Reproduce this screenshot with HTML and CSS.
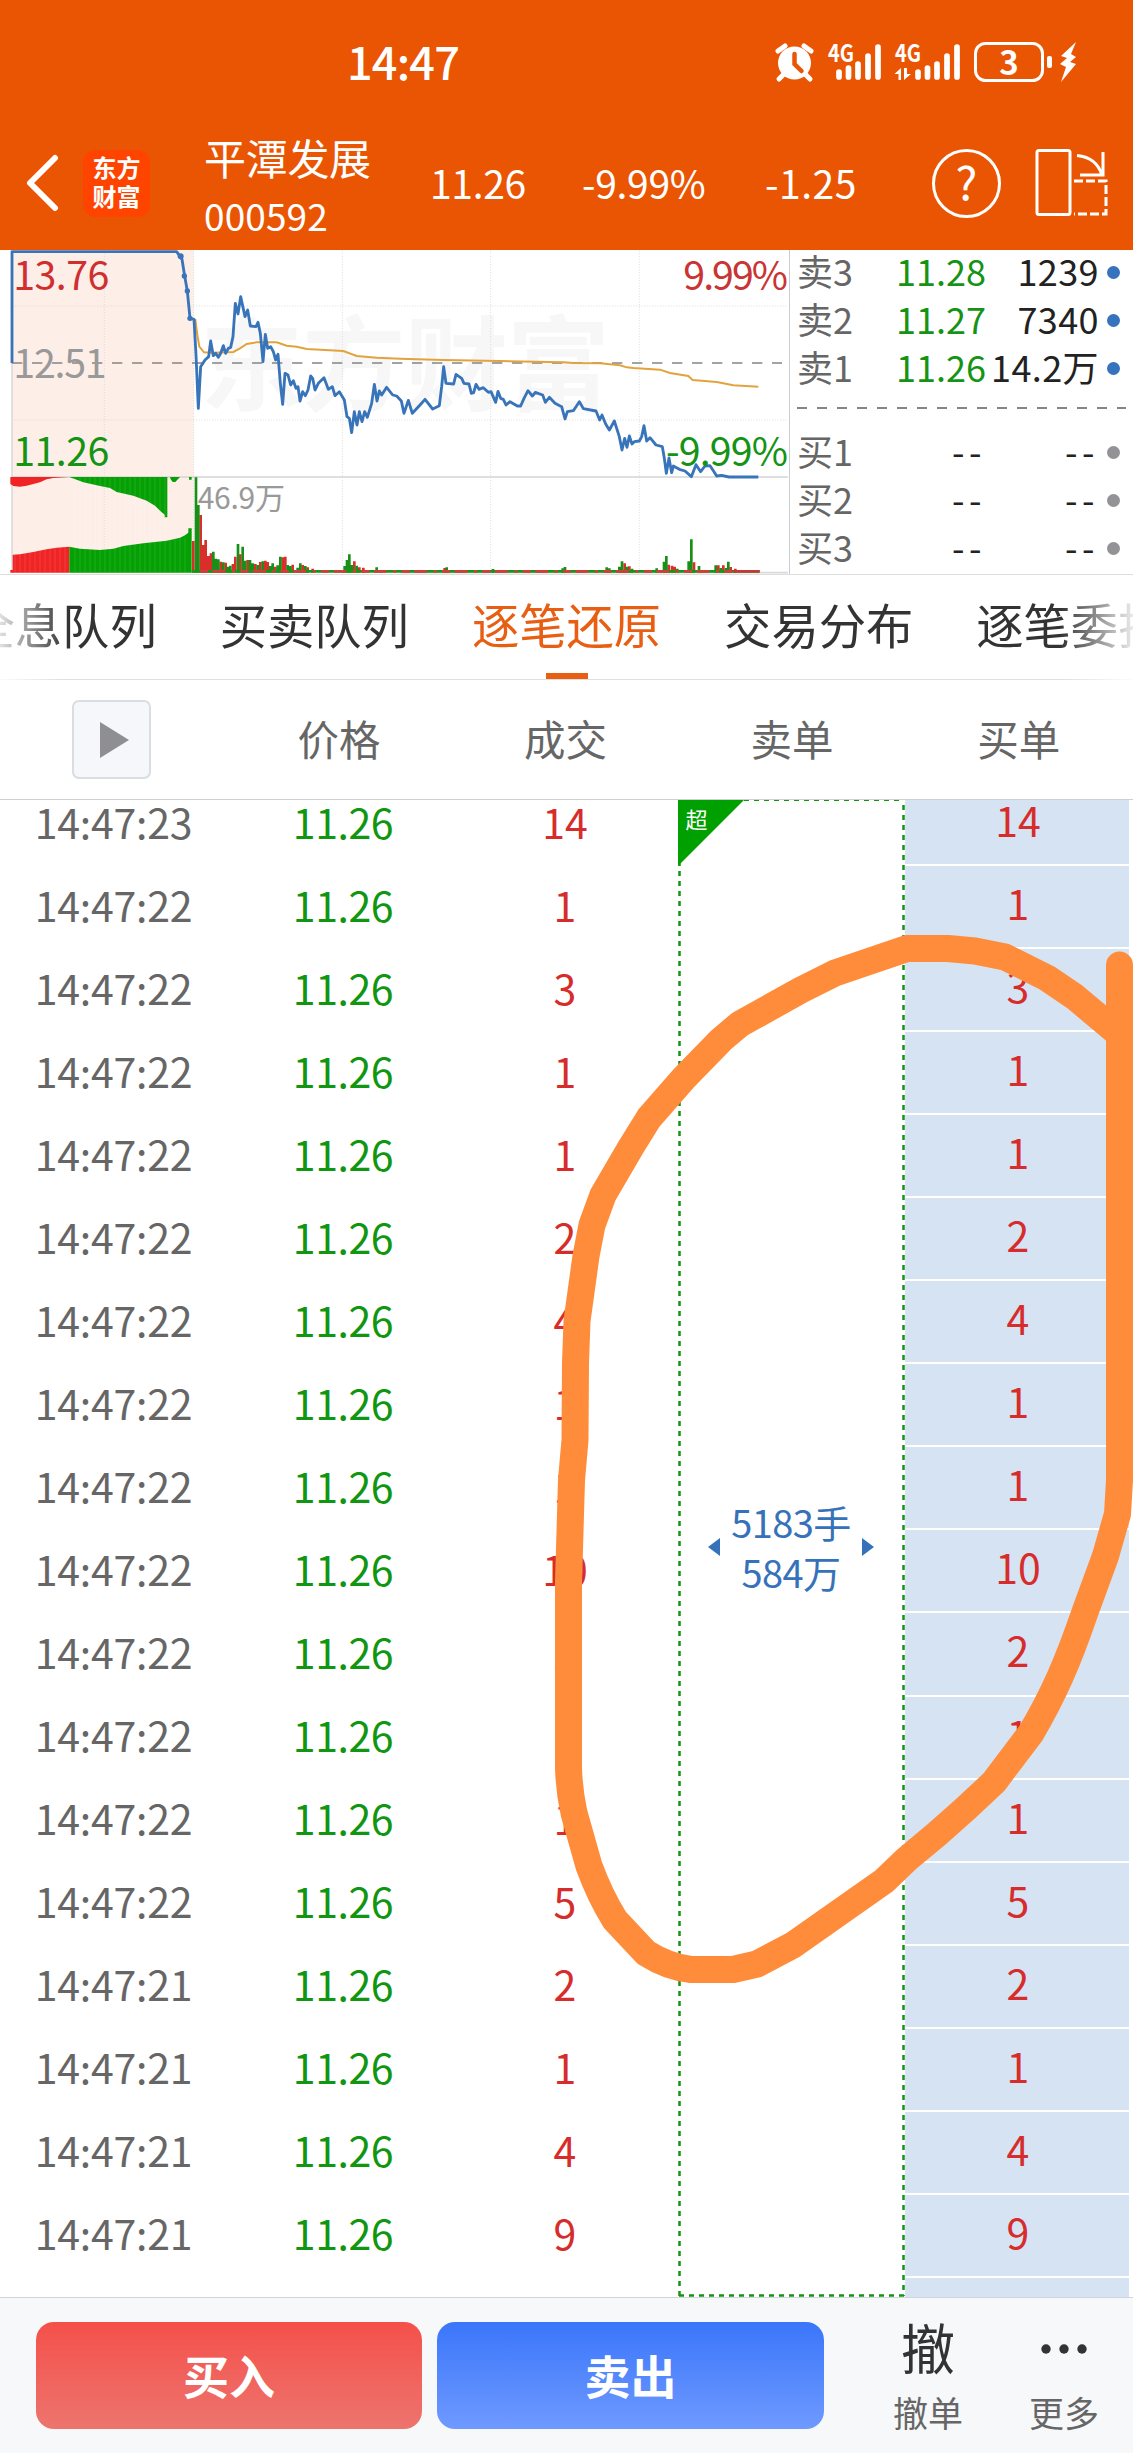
FILE: index.html
```html
<!DOCTYPE html>
<html lang="zh-CN">
<head>
<meta charset="utf-8">
<title>平潭发展 000592</title>
<link rel="stylesheet" href="styles.css">
</head>
<body>
<div class="app">
  <header class="top">
    <div class="status">
      <span class="clock">14:47</span>
      <svg class="status-icons" width="310" height="50" viewBox="770 38 310 50" fill="#fff">
        <circle cx="794.5" cy="63" r="16.5"/>
        <path d="M778 51l7-5M811 51l-7-5M784 74l-5 5M805 74l5 5" stroke="#fff" stroke-width="5" stroke-linecap="round"/>
        <path d="M794.500 54v10l7 7" fill="none" stroke="#ea5504" stroke-width="4.500" stroke-linecap="round"/>
        <text class="net" x="828" y="62" textLength="26" lengthAdjust="spacingAndGlyphs">4G</text>
        <path class="bars" d="M839 72v5M848.500 68v9M858 64v13M868 56v21M878 47v30"/>
        <text class="net" x="895" y="62" textLength="26" lengthAdjust="spacingAndGlyphs">4G</text>
        <path d="M901 68v12h-2.500v-6h-4zM904 68v12l7-6h-4v-6z"/>
        <path class="bars" d="M918 72v5M927.500 68v9M937 64v13M947 56v21M957 47v30"/>
        <rect x="975.500" y="43.500" width="67" height="37" rx="10" fill="none" stroke="#fff" stroke-width="3"/>
        <text class="charge" x="1009" y="74.500" text-anchor="middle">3</text>
        <rect x="1047" y="56" width="5" height="12" rx="2"/>
        <path d="M1076 42l-15 14 6 2-7 6 6 3-5 15 15-18-6-2 6-5-5-3z"/>
      </svg>
    </div>
    <div class="nav">
      <svg class="back" width="34" height="58" viewBox="0 0 34 58"><path d="M30 4L5 29l25 25" fill="none" stroke="#fff" stroke-width="6" stroke-linecap="round" stroke-linejoin="round"/></svg>
      <div class="logo"><span>东方</span><span>财富</span></div>
      <div class="stock"><span class="name">平潭发展</span><span class="code">000592</span></div>
      <div class="quote q1">11.26</div>
      <div class="quote q2">-9.99%</div>
      <div class="quote q3">-1.25</div>
      <div class="help">?</div>
      <svg class="rotate" width="76" height="72" viewBox="1034 147 76 72" fill="none" stroke="#fff" stroke-width="3">
        <rect x="1037" y="150.500" width="33" height="64" rx="2"/>
        <path d="M1077 155.500q20 2 25 20M1103 152v23h-23"/>
        <path d="M1074 181h32v33h-32" stroke-dasharray="9 3"/>
      </svg>
    </div>
  </header>

  <section class="market">
    <svg class="chart" width="789" height="324" viewBox="0 30 2367 972">
      <rect x="36" y="32" width="545" height="966" fill="#fdeee8"/>
      <text class="mark" x="600" y="488" textLength="1230">东方财富</text>
      <path d="M313 32V998M581 32V998M1027 32V998M1472 32V998M1918 32V998M36 198H2364M36 540H2364" class="grid"/>
      <path d="M36 32V998" stroke="#d5d5d8" stroke-width="4"/>
      <path d="M36 369H2346" stroke="#858585" stroke-width="5" stroke-dasharray="31 29"/>
      <path d="M36 711H2364" stroke="#d4d4d4" stroke-width="5"/>
      <path d="M1200 998H2364" stroke="#d9d9d9" stroke-width="5"/>
      <g class="red">
        <path d="M31 711H208L160 714 140 718 120 727 100 732 80 737 60 740 40 738 31 732zM31 998V990H38V944L60 943 100 936 140 928 170 923 208 920V998z"/>
        <path class="vol" d="M580 998V903M602 998V825M610 998V915M617 998V900M625 998V948M633 998V940M662 998V965M677 998V968M699 998V972M706 998V950M721 998V943M743 998V960M766 998V972M781 998V966M796 998V962M803 998V966M826 998V980M848 998V952M856 998V950M878 998V974M908 998V975M923 998V982M938 998V986M1063 998V964M1078 998V982M1090 998V983M1334 998V984M1874 998V970M1888 998V979M2006 998V974M2016 998V977M2024 998V980M2082 998V967M2155 998V976M2170 998V976M2192 998V981M2206 998V986"/>
      </g>
      <g class="green">
        <path d="M208 711L250 727 300 738 330 744 350 756 400 767 440 782 465 797 480 812 494 824V832H502V711zM510 711h30l-14 15h-8l-6-8zM567 711h8v8h-8zM208 998V920L240 926 300 930 340 926 370 918 430 910 500 902 540 893 555 886 565 878V865H575V998z"/>
        <path class="vol" d="M588 998V712M595 998V795M640 998V935M647 998V956M655 998V958M670 998V967M684 998V980M691 998V977M714 998V912M728 998V920M736 998V962M750 998V960M758 998V970M773 998V975M788 998V964M811 998V978M818 998V970M833 998V976M841 998V950M863 998V975M871 998V978M893 998V983M901 998V970M916 998V978M1034 998V978M1041 998V960M1048 998V943M1056 998V975M1070 998V977M1130 998V982M1340 998V982M1479 998V987M1688 998V985M1695 998V981M1820 998V982M1828 998V985M1858 998V980M1866 998V964M1881 998V980M1896 998V986M1970 998V985M1992 998V965M1999 998V948M2032 998V986M2066 998V964M2074 998V898M2097 998V978M2147 998V976M2162 998V984M2178 998V984M2185 998V965"/>
      </g>
      <path d="M45 925V998M60 920V998M75 920V998M90 920V998M105 920V998M120 920V998M135 920V998M150 920V998M165 920V998M180 920V998M195 920V998M225 712V998M240 712V998M255 712V998M270 712V998M285 712V998M300 712V998M315 712V998M330 712V998M345 712V998M360 712V998M375 712V998M390 712V998M405 712V998M420 712V998M435 712V998M450 712V998M465 712V998M480 712V998M495 712V998M510 895V998M525 895V998M540 895V998M555 895V998" stroke="#fff" stroke-opacity=".2" stroke-width="2"/>
      <path d="M575 994H2279" stroke="#159615" stroke-width="8"/>
      <path d="M600 994H2200" stroke="#d13c3c" stroke-width="8" stroke-dasharray="24 14 38 20 9 16"/>
      <path d="M2200 994H2279" stroke="#c33838" stroke-width="8"/>
      <path class="avg" d="M586 237L592 285 598 320 612 337 640 338 700 336 720 325 740 312 770 307 830 307 860 317 890 320 920 327 1030 333 1070 348 1130 353 1200 356 1330 360 1500 363 1690 367 1720 369 1800 370 1860 376 1880 382 1900 384 1980 389 2010 399 2065 408 2078 420 2150 426 2200 436 2275 440"/>
      <path class="price" d="M36 369V35H530L546 58 554 108 562 153 570 235 582 238 588 345 595 505 602 380 615 360 626 350 632 303 640 347 647 340 655 352 662 340 670 317 677 340 685 325 692 322 699 290 706 190 714 222 722 170 735 230 743 210 751 258 768 260 774 247 781 280 789 365 796 283 803 325 812 320 820 335 827 360 834 343 841 430 848 493 855 400 864 405 872 435 880 422 888 445 894 440 900 483 908 455 916 467 924 450 932 408 938 415 945 450 955 430 972 413 985 448 997 440 1005 467 1018 455 1033 480 1041 530 1048 535 1055 578 1063 515 1071 555 1078 515 1086 545 1094 515 1102 532 1115 490 1123 433 1131 483 1138 453 1145 465 1160 442 1178 465 1190 468 1204 483 1212 520 1225 481 1237 520 1260 495 1275 478 1298 507 1318 497 1325 440 1331 380 1338 430 1361 432 1368 403 1385 415 1392 430 1407 432 1414 460 1421 458 1428 433 1437 448 1450 443 1465 457 1473 455 1487 487 1494 454 1502 475 1510 478 1518 495 1530 485 1552 498 1562 498 1572 475 1584 452 1597 468 1606 457 1628 465 1636 487 1648 472 1665 490 1685 500 1695 537 1702 515 1720 512 1738 485 1750 506 1788 513 1799 540 1806 525 1817 552 1828 570 1843 543 1858 590 1866 630 1874 595 1881 622 1888 588 1896 612 1903 605 1918 603 1925 590 1932 557 1940 603 1950 593 1968 615 1987 620 1993 655 1999 700 2007 654 2015 698 2020 678 2038 688 2055 693 2074 710 2088 674 2102 695 2115 678 2130 677 2142 695 2150 708 2165 706 2187 711H2275"/>
      <g fill="#3874b9"><circle cx="542" cy="49" r="9"/><circle cx="553" cy="108" r="8"/><circle cx="562" cy="153" r="8"/><circle cx="570" cy="235" r="8"/></g>
      <g class="scale">
        <text x="40" y="150" textLength="288" fill="#cf2f2f">13.76</text>
        <text x="40" y="413" textLength="280" fill="#999">12.51</text>
        <text x="40" y="678" textLength="288" fill="#149314">11.26</text>
        <text x="2050" y="150" textLength="314" fill="#c93434">9.99%</text>
        <text x="1998" y="678" textLength="366" fill="#149314">-9.99%</text>
        <text x="593" y="807" textLength="262" class="small">46.9万</text>
      </g>
    </svg>
    <div class="book">
      <div class="level sell"><span>卖3</span><b>11.28</b><em>1239</em><i></i></div>
      <div class="level sell"><span>卖2</span><b>11.27</b><em>7340</em><i></i></div>
      <div class="level sell"><span>卖1</span><b>11.26</b><em>14.2万</em><i></i></div>
      <div class="split"></div>
      <div class="level buy"><span>买1</span><b>--</b><em>--</em><i></i></div>
      <div class="level buy"><span>买2</span><b>--</b><em>--</em><i></i></div>
      <div class="level buy"><span>买3</span><b>--</b><em>--</em><i></i></div>
    </div>
  </section>

  <nav class="tabs">
    <a>全息队列</a><a>买卖队列</a><a class="on">逐笔还原</a><a>交易分布</a><a>逐笔委托</a>
  </nav>

  <div class="cols">
    <div><button class="play"><svg width="29" height="36" viewBox="0 0 29 36"><path d="M0 0l29 18L0 36z" fill="#8e8e93"/></svg></button></div>
    <div>价格</div><div>成交</div><div>卖单</div><div>买单</div>
  </div>

  <main class="ticks">
    <div class="deals">
      <div class="row"><span>14:47:23</span><b>11.26</b><em>14</em></div>
      <div class="row"><span>14:47:22</span><b>11.26</b><em>1</em></div>
      <div class="row"><span>14:47:22</span><b>11.26</b><em>3</em></div>
      <div class="row"><span>14:47:22</span><b>11.26</b><em>1</em></div>
      <div class="row"><span>14:47:22</span><b>11.26</b><em>1</em></div>
      <div class="row"><span>14:47:22</span><b>11.26</b><em>2</em></div>
      <div class="row"><span>14:47:22</span><b>11.26</b><em>4</em></div>
      <div class="row"><span>14:47:22</span><b>11.26</b><em>1</em></div>
      <div class="row"><span>14:47:22</span><b>11.26</b><em>1</em></div>
      <div class="row"><span>14:47:22</span><b>11.26</b><em>10</em></div>
      <div class="row"><span>14:47:22</span><b>11.26</b><em>2</em></div>
      <div class="row"><span>14:47:22</span><b>11.26</b><em>1</em></div>
      <div class="row"><span>14:47:22</span><b>11.26</b><em>1</em></div>
      <div class="row"><span>14:47:22</span><b>11.26</b><em>5</em></div>
      <div class="row"><span>14:47:21</span><b>11.26</b><em>2</em></div>
      <div class="row"><span>14:47:21</span><b>11.26</b><em>1</em></div>
      <div class="row"><span>14:47:21</span><b>11.26</b><em>4</em></div>
      <div class="row"><span>14:47:21</span><b>11.26</b><em>9</em></div>
    </div>
    <div class="sellorder">
      <svg class="frame" width="227" height="1497" viewBox="0 0 227 1497">
        <path d="M66 .5H225" stroke="#149414" stroke-width="1" stroke-dasharray="5 5"/>
        <path d="M1.500 1V1496M225.500 5V1496M1 1495.500H226" stroke="#149414" stroke-width="2.500" stroke-dasharray="5 5"/>
        <path d="M0 0H66L0 66z" fill="#00a000"/>
        <text x="7.500" y="28">超</text>
      </svg>
      <div class="lot">
        <svg width="12" height="18"><path d="M12 0v18L0 9z" fill="#3672b9"/></svg>
        <div><p>5183手</p><p>584万</p></div>
        <svg width="12" height="18"><path d="M0 0v18l12-9z" fill="#3672b9"/></svg>
      </div>
    </div>
    <div class="buyorder">
      <div>14</div><div>1</div><div>3</div><div>1</div><div>1</div><div>2</div><div>4</div><div>1</div><div>1</div><div>10</div><div>2</div><div>1</div><div>1</div><div>5</div><div>2</div><div>1</div><div>4</div><div>9</div><div></div>
    </div>
  </main>

  <footer class="bar">
    <button class="btn red-btn">买入</button>
    <button class="btn blue-btn">卖出</button>
    <div class="act cancel"><span class="glyph">撤</span><span>撤单</span></div>
    <div class="act more"><span class="glyph"><svg width="48" height="12" fill="#333"><circle cx="6" cy="6" r="4.700"/><circle cx="24" cy="6" r="4.700"/><circle cx="42" cy="6" r="4.700"/></svg></span><span>更多</span></div>
  </footer>

  <svg class="ink" width="1133" height="2453" viewBox="0 0 1133 2453">
    <path d="M1119.500 965V1480L1117.500 1514 1105.500 1556 1085 1612 Q1072 1650 1060 1677 1047 1706 1031 1733L994 1782 Q967 1808 937 1834L907 1859 884 1881 793 1945 757 1964 733 1969.500H691Q668 1967 646 1953L615 1920 Q600 1896 589 1866L574 1813 Q569 1790 568.500 1767V1583L571.500 1480 575 1440 575.500 1363 577 1321 586 1256 592 1225 603 1195 631 1147 649 1118 684 1078 721 1040 740 1024 801 990 835 973 907 948.500H948L975 951 1005 957 1047 978 1075 997 1119 1034"/>
  </svg>
</div>
</body>
</html>
```
FILE: styles.css
```css
* { box-sizing: border-box; margin: 0; padding: 0; }
body { width: 1133px; background: #fff; font-family: "Noto Sans CJK SC", sans-serif; color: #333; }
b, em, i { font-weight: 400; font-style: normal; }
button { font-family: inherit; border: 0; }
.app { position: relative; width: 1133px; height: 2453px; overflow: hidden; display: flex; flex-direction: column; }

.top { height: 250px; background: #ea5504; color: #fff; }
.status { height: 126px; padding: 38px 0 0 347px; display: flex; }
.status-icons { overflow: visible; }
.clock { width: 423px; font-size: 45px; font-weight: 500; line-height: 45px; letter-spacing: -.8px; }
.net { font-size: 24px; font-weight: 700; }
.charge { font-size: 33px; font-weight: 700; }
.bars { stroke: #fff; stroke-width: 5.700px; stroke-linecap: round; }
.nav { height: 124px; padding-left: 25px; display: flex; align-items: center; padding-bottom: 10px; }
.back { flex: none; }
.logo { flex: none; margin-left: 24px; width: 67px; height: 67px; border-radius: 12px; background: #ff4400; display: flex; flex-direction: column; align-items: center; padding-top: 2px; font-size: 24px; font-weight: 700; line-height: 29px; }
.stock { flex: none; width: 226px; margin-left: 54px; display: flex; flex-direction: column; }
.name { font-size: 42px; line-height: 60px; letter-spacing: -.3px; margin-top: 3px; }
.code { font-size: 37px; line-height: 56px; letter-spacing: .1px; }
.quote { flex: none; font-size: 39px; line-height: 50px; letter-spacing: -.3px; margin-top: -2px; }
.q1 { width: 152px; }
.q2 { width: 183px; }
.q3 { width: 167px; letter-spacing: .5px; }
.help { flex: none; width: 69px; height: 69px; border: 3px solid #fff; border-radius: 50%; text-align: center; font-size: 46px; line-height: 57px; }
.rotate { flex: none; margin-left: 33px; }

.market { height: 325px; display: flex; border-bottom: 1px solid #dedede; }
.chart { flex: none; display: block; }
.mark { font-size: 310px; font-weight: 700; fill: #f7f7f7; }
.grid { stroke: #dcdcdc; stroke-width: 3px; stroke-dasharray: 3 5; fill: none; }
.red { fill: #f02424; }
.green { fill: #04a004; }
.vol { stroke-width: 8px; }
.red .vol { stroke: #d92f2b; }
.green .vol { stroke: #188f16; }
.avg { fill: none; stroke: #e2a33d; stroke-width: 6px; }
.price { fill: none; stroke: #3874b9; stroke-width: 8.500px; stroke-linejoin: round; }
.scale { font-size: 118px; }
.small { font-size: 90px; fill: #999; }
.book { width: 344px; border-left: 1px solid #ccc; padding-left: 7px; }
.level { height: 48px; display: flex; align-items: center; font-size: 36px; line-height: 48px; padding-bottom: 8px; color: #666; }
.level span { width: 74px; }
.level b { width: 115px; text-align: right; color: #149314; }
.level em { width: 113px; text-align: right; color: #222; white-space: nowrap; letter-spacing: .4px; }
.level i { width: 13px; height: 13px; border-radius: 50%; margin: 4px 0 0 8px; background: #3573bd; }
.buy b, .buy em { color: #222; letter-spacing: 4.500px; }
.buy i { background: #929297; }
.split { height: 36px; margin-right: 7px; background: repeating-linear-gradient(90deg, #858585 0 10px, transparent 10px 20px) 0 13px / 100% 2px no-repeat; }

.tabs { height: 105px; display: flex; justify-content: center; gap: 63px; border-bottom: 1px solid #dfdfdf; overflow: hidden; font-size: 47.300px; line-height: 98px; color: #333; -webkit-mask-image: linear-gradient(90deg, rgba(0,0,0,.15), #000 66px, #000 1060px, rgba(0,0,0,.1)); }
.tabs a { flex: none; white-space: nowrap; }
.tabs .on { color: #e85f13; background: linear-gradient(#e85f13, #e85f13) 50% 98px / 42px 6px no-repeat; }

.cols { height: 120px; display: grid; grid-template-columns: repeat(5, 1fr); align-items: center; text-align: center; font-size: 41.500px; line-height: 60px; color: #666; border-bottom: 1px solid #ccd1d6; }
.cols div:not(:first-child) { padding: 0 2px 4px 0; }
.play { width: 79px; height: 79px; background: #f5f7fb; border: 2px solid #dadde1; border-radius: 7px; display: flex; align-items: center; justify-content: center; margin: 0 auto 0 72px; padding-left: 6px; }

.ticks { height: 1497px; display: flex; overflow: hidden; font-size: 41px; }
.deals { width: 678px; margin-top: -17px; }
.row { height: 83.060px; display: grid; grid-template-columns: repeat(3, 1fr); align-items: center; text-align: center; line-height: 60px; padding-bottom: 8px; }
.row span { color: #666; letter-spacing: -.2px; padding-left: 1px; }
.row b { color: #109610; padding-left: 8px; letter-spacing: -.4px; }
.row em { color: #d72c2c; }
.sellorder { width: 227px; display: grid; }
.frame { grid-area: 1 / 1; fill: none; }
.frame text { font-size: 22px; fill: #fff; }
.lot { grid-area: 1 / 1; align-self: start; margin-top: 697px; display: flex; align-items: center; justify-content: space-between; padding: 0 31px 0 30px; color: #3672b9; text-align: center; }
.lot p { font-size: 38px; line-height: 49.500px; letter-spacing: -.6px; white-space: nowrap; }
.buyorder { width: 224px; margin-top: -17px; }
.buyorder div { height: 83.060px; line-height: 73px; text-align: center; background: #d6e3f2; border-bottom: 2px solid #fff; color: #d72c2c; padding-left: 2px; }

.bar { height: 156px; background: #f7f8fa; border-top: 1px solid #cfd5dc; display: flex; padding: 24px 0 0 36px; }
.btn { height: 107px; border-radius: 18px; color: #fff; font-size: 46px; font-weight: 700; padding-bottom: 4px; }
.red-btn { width: 386px; background: linear-gradient(#f5504a, #ed746e); }
.blue-btn { width: 387px; margin-left: 15px; background: linear-gradient(#3a76fa, #6f99ff); }
.act { width: 136px; display: flex; flex-direction: column; align-items: center; font-size: 35px; line-height: 50px; color: #666; }
.cancel { margin-left: 36px; }
.glyph { height: 63px; margin-bottom: 2px; font-size: 54px; line-height: 50px; color: #333; }
.more .glyph svg { display: block; margin-top: 21px; }
.ink { position: absolute; left: 0; top: 0; pointer-events: none; }
.ink path { fill: none; stroke: #ff8c3a; stroke-width: 27px; stroke-linecap: round; stroke-linejoin: round; }
```
